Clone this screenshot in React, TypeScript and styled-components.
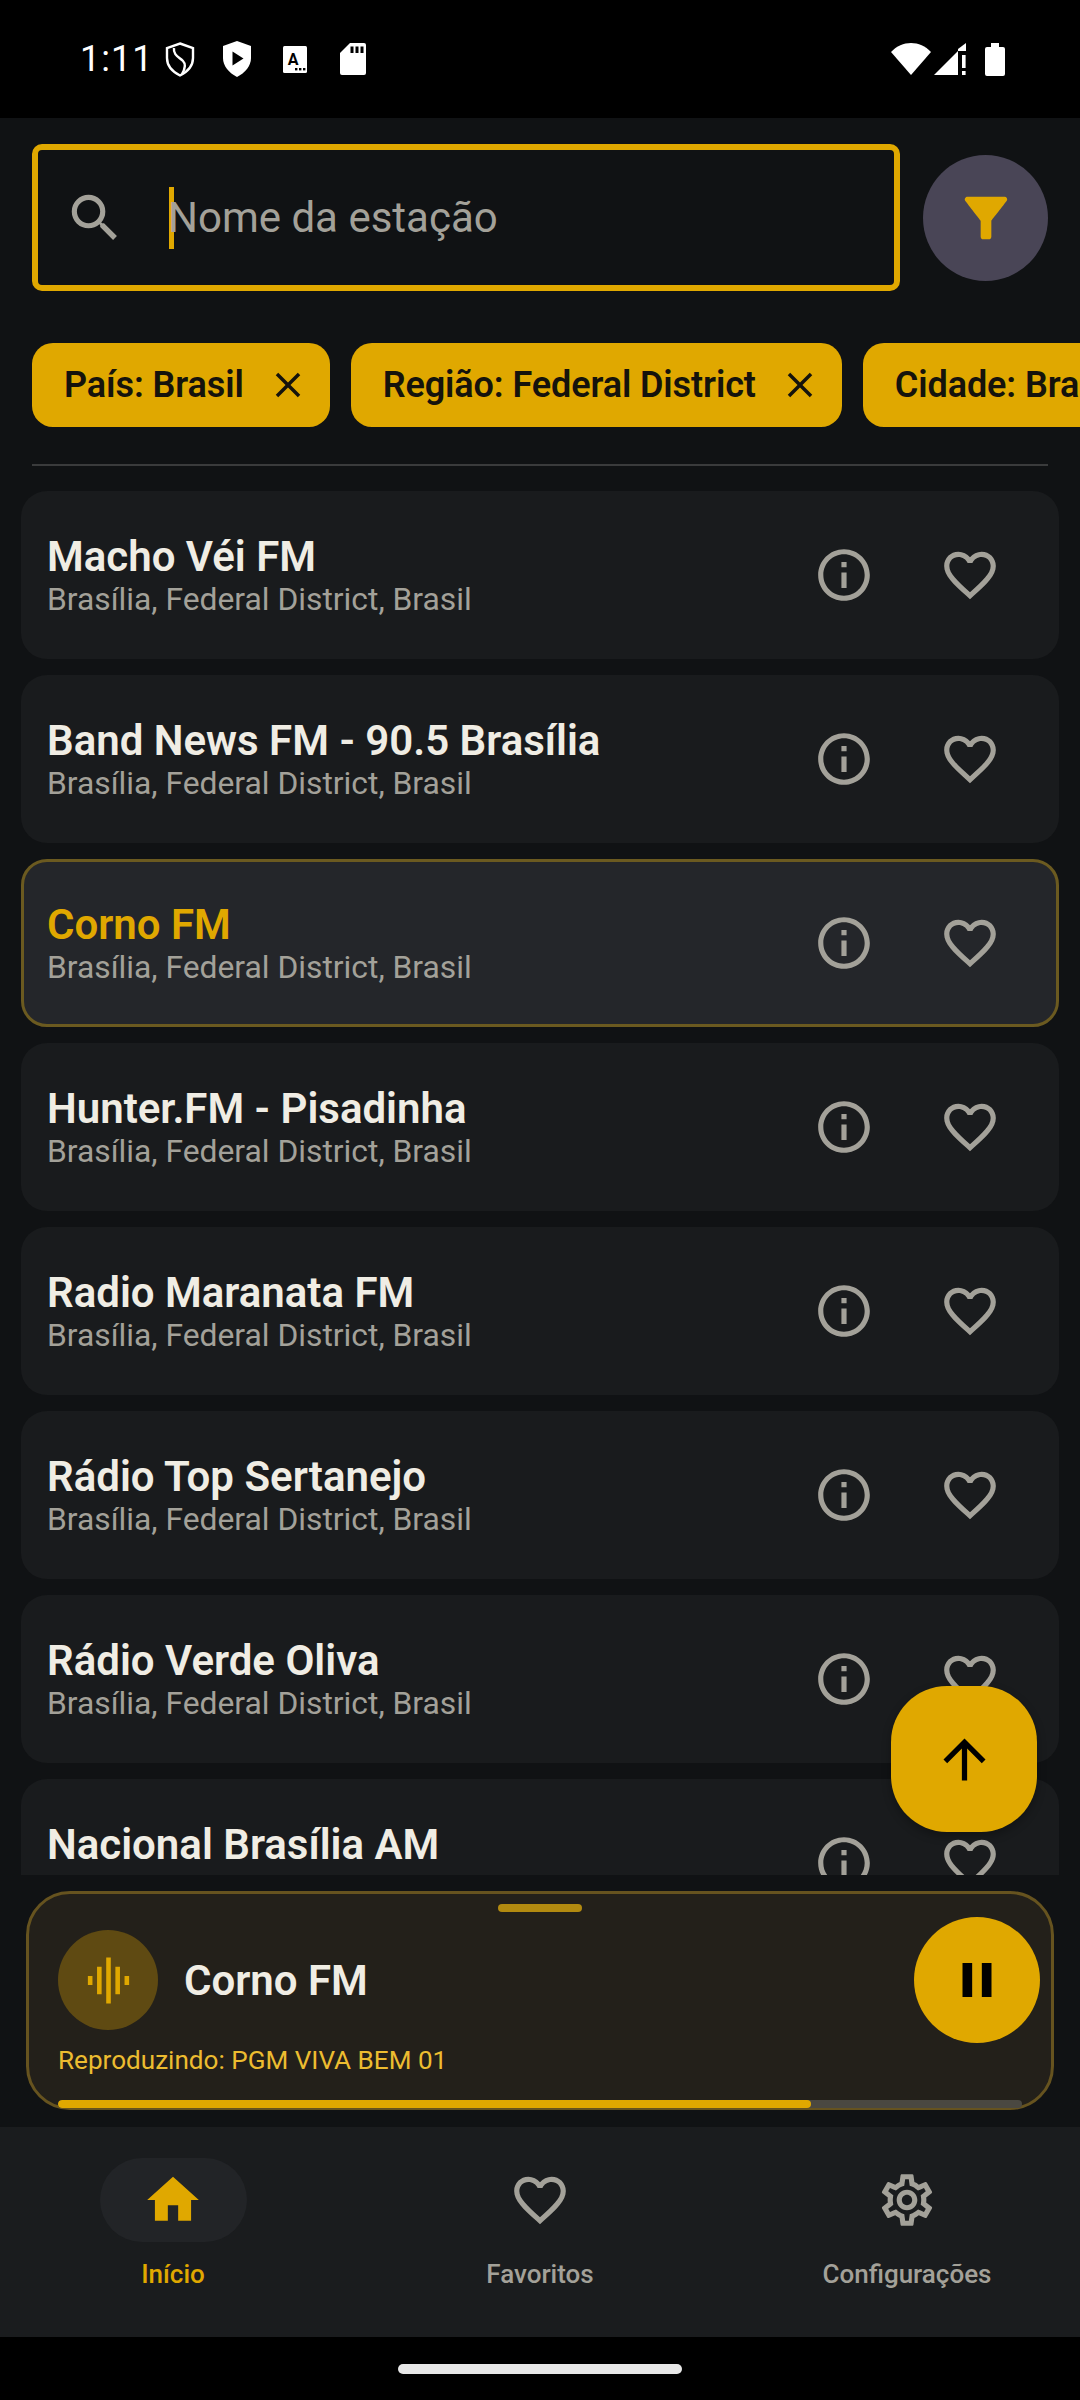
import { MdArrowUpward, MdClose, MdFavoriteBorder, MdFilterAlt, MdGraphicEq, MdHome, MdInfoOutline, MdOutlineSettings, MdPause, MdSearch } from "react-icons/md";
import styled, { createGlobalStyle } from "styled-components";

const GOLD = "#e0a800";

const stations = [
  "Macho Véi FM",
  "Band News FM - 90.5 Brasília",
  "Corno FM",
  "Hunter.FM - Pisadinha",
  "Radio Maranata FM",
  "Rádio Top Sertanejo",
  "Rádio Verde Oliva",
  "Nacional Brasília AM",
];

const filters = ["País: Brasil", "Região: Federal District", "Cidade: Brasília"];

const App = () => {
  return (
    <Screen>
      <GlobalStyle />
      <StatusBar>
        <StatusLeft>
          <Clock>1:11</Clock>
          <StatusIcon $left={12} width="30" height="35" viewBox="0 0 30 35" fill="none" stroke="#fff" strokeWidth="2.4">
            <path d="M15 1.5 L28 6 V16 C28 24 22 30 15 33.5 C8 30 2 24 2 16 V6 Z" />
            <path d="M9 6 C8 13 14 15 18 19 C21 22 20 27 17 32" />
          </StatusIcon>
          <StatusIcon $left={27} width="30" height="36" viewBox="0 0 30 36">
            <path fill="#fff" d="M15 0 L29 5 V17 C29 25 23 32 15 36 C7 32 1 25 1 17 V5 Z" />
            <path fill="#000" d="M10.5 10.5 L21.5 17.5 L10.5 24.5 Z" />
          </StatusIcon>
          <StatusIcon $left={31} width="24" height="27" viewBox="0 0 24 27">
            <rect width="24" height="27" rx="1.5" fill="#fff" />
            <text x="10" y="19" fontFamily="Roboto, sans-serif" fontWeight="700" fontSize="16" textAnchor="middle" fill="#000">A</text>
            <rect x="12" y="22" width="2.4" height="2.4" fill="#000" />
            <rect x="16" y="22" width="2.4" height="2.4" fill="#000" />
            <rect x="20" y="22" width="2.4" height="2.4" fill="#000" />
          </StatusIcon>
          <StatusIcon $left={33} width="26" height="32" viewBox="0 0 26 32">
            <path fill="#fff" d="M10 0 H24 A2 2 0 0 1 26 2 V30 A2 2 0 0 1 24 32 H2 A2 2 0 0 1 0 30 V10 Z" />
            <rect x="10.5" y="3.5" width="3" height="6.5" fill="#000" />
            <rect x="15.5" y="3.5" width="3" height="6.5" fill="#000" />
            <rect x="20.5" y="3.5" width="3" height="6.5" fill="#000" />
          </StatusIcon>
        </StatusLeft>
        <StatusRight>
          <StatusIcon $left={0} width="40" height="32" viewBox="0 0 40 32">
            <path fill="#fff" d="M0 9 C11 -3 29 -3 40 9 L20 32 Z" />
          </StatusIcon>
          <StatusIcon $left={3} width="32" height="32" viewBox="0 0 32 32">
            <path fill="#fff" d="M24 8 V32 H0 Z" />
            <rect x="28" y="12" width="3.6" height="13" fill="#fff" />
            <rect x="28" y="28" width="3.6" height="4" fill="#fff" />
            <path fill="#fff" d="M24 6 L32 0 V8 H24 Z" />
          </StatusIcon>
          <StatusIcon $left={19} width="20" height="33" viewBox="0 0 20 33">
            <path fill="#fff" d="M6 0 H14 V4 H18 A2 2 0 0 1 20 6 V31 A2 2 0 0 1 18 33 H2 A2 2 0 0 1 0 31 V6 A2 2 0 0 1 2 4 H6 Z" />
          </StatusIcon>
        </StatusRight>
      </StatusBar>

      <Content>
        <SearchRow>
          <SearchField>
            <MdSearch size={62} color="#a3a199" />
            <Caret />
            <Placeholder>Nome da estação</Placeholder>
          </SearchField>
          <FilterButton>
            <MdFilterAlt size={64} color={GOLD} />
          </FilterButton>
        </SearchRow>

        <ChipRow>
          {filters.map((filter) => (
            <Chip key={filter}>
              {filter}
              <MdClose size={42} />
            </Chip>
          ))}
        </ChipRow>

        <Divider />

        <StationList>
          {stations.map((name) => (
            <StationCard key={name} $active={name === "Corno FM"}>
              <StationText>
                <StationName $active={name === "Corno FM"}>{name}</StationName>
                <StationPlace>Brasília, Federal District, Brasil</StationPlace>
              </StationText>
              <StationAction>
                <MdInfoOutline size={62} />
              </StationAction>
              <StationAction>
                <MdFavoriteBorder size={62} />
              </StationAction>
            </StationCard>
          ))}
          <ScrollTop>
            <MdArrowUpward size={63} />
          </ScrollTop>
        </StationList>

        <Player>
          <Handle />
          <PlayerRow>
            <Artwork>
              <MdGraphicEq size={55} color={GOLD} />
            </Artwork>
            <PlayerName>Corno FM</PlayerName>
            <PauseButton>
              <MdPause size={58} />
            </PauseButton>
          </PlayerRow>
          <NowPlaying>Reproduzindo: PGM VIVA BEM 01</NowPlaying>
          <ProgressTrack>
            <ProgressFill style={{ width: `${(753 / 964) * 100}%` }} />
          </ProgressTrack>
        </Player>

        <BottomNav>
          <NavItem>
            <NavPill $active>
              <MdHome size={62} color={GOLD} />
            </NavPill>
            <NavLabel $active>Início</NavLabel>
          </NavItem>
          <NavItem>
            <NavPill>
              <MdFavoriteBorder size={62} />
            </NavPill>
            <NavLabel>Favoritos</NavLabel>
          </NavItem>
          <NavItem>
            <NavPill>
              <MdOutlineSettings size={62} />
            </NavPill>
            <NavLabel>Configurações</NavLabel>
          </NavItem>
        </BottomNav>
      </Content>

      <GestureArea>
        <GestureBar />
      </GestureArea>
    </Screen>
  );
};

export default App;

/*
Styles
*/

const GlobalStyle = createGlobalStyle`
  html, body {
    margin: 0;
    padding: 0;
    background: #000;
  }
`;

const Screen = styled.div`
  display: flex;
  flex-direction: column;
  width: 1080px;
  height: 2400px;
  overflow: hidden;
  font-family: Roboto, sans-serif;
  background: #000;
`;

const StatusBar = styled.div`
  display: flex;
  justify-content: space-between;
  align-items: center;
  flex: 0 0 118px;
  padding: 0 75px 0 80px;
  box-sizing: border-box;
`;

const StatusLeft = styled.div`
  display: flex;
  align-items: center;
`;

const StatusIcon = styled.svg<{ $left: number }>`
  margin-left: ${(p) => p.$left}px;
`;

const Clock = styled.span`
  color: #fff;
  font-size: 36px;
  letter-spacing: 1px;
`;

const StatusRight = styled.div`
  display: flex;
  align-items: center;
`;

const Content = styled.div`
  display: flex;
  flex-direction: column;
  flex: 1;
  min-height: 0;
  background: #101214;
`;

const SearchRow = styled.div`
  display: flex;
  align-items: center;
  gap: 23px;
  padding: 26px 32px 0;
`;

const SearchField = styled.div`
  display: flex;
  flex-shrink: 0;
  align-items: center;
  width: 868px;
  height: 147px;
  padding-left: 26px;
  box-sizing: border-box;
  border: 6px solid ${GOLD};
  border-radius: 10px;
`;

const Caret = styled.div`
  width: 5px;
  height: 62px;
  margin-left: 43px;
  background: ${GOLD};
`;

const Placeholder = styled.span`
  margin-left: -6px;
  color: #a3a199;
  font-size: 42px;
`;

const FilterButton = styled.div`
  display: flex;
  justify-content: center;
  align-items: center;
  width: 126px;
  height: 126px;
  border-radius: 50%;
  background: #494556;
`;

const ChipRow = styled.div`
  display: flex;
  gap: 21px;
  margin-top: 52px;
  padding-left: 32px;
  overflow: hidden;
`;

const Chip = styled.div`
  display: flex;
  flex-shrink: 0;
  align-items: center;
  gap: 23px;
  height: 84px;
  padding: 0 21px 0 32px;
  box-sizing: border-box;
  border-radius: 21px;
  background: ${GOLD};
  color: #15130c;
  font-size: 36px;
  font-weight: 600;
  letter-spacing: -0.1px;
`;

const Divider = styled.div`
  flex-shrink: 0;
  height: 2px;
  margin: 37px 32px 0;
  background: #3a3b3c;
`;

const StationList = styled.div`
  position: relative;
  display: flex;
  flex: 1;
  flex-direction: column;
  gap: 16px;
  min-height: 0;
  margin-top: 25px;
  padding: 0 21px;
  overflow: hidden;
`;

const StationCard = styled.div<{ $active?: boolean }>`
  display: flex;
  flex-shrink: 0;
  align-items: center;
  height: 168px;
  padding: 0 23px;
  box-sizing: border-box;
  border: 3px solid ${(p) => (p.$active ? "#6b5a20" : "transparent")};
  border-radius: 26px;
  background: ${(p) => (p.$active ? "#24262a" : "#191b1d")};
`;

const StationText = styled.div`
  display: flex;
  flex: 1;
  flex-direction: column;
  min-width: 0;
`;

const StationName = styled.div<{ $active?: boolean }>`
  color: ${(p) => (p.$active ? GOLD : "#f0ede4")};
  font-size: 42px;
  font-weight: 600;
  line-height: 48px;
`;

const StationPlace = styled.div`
  color: #a3a199;
  font-size: 31.8px;
  line-height: 36px;
`;

const StationAction = styled.div`
  display: flex;
  justify-content: center;
  align-items: center;
  width: 126px;
  color: #a3a199;
`;

const ScrollTop = styled.div`
  position: absolute;
  top: 1195px;
  right: 43px;
  display: flex;
  justify-content: center;
  align-items: center;
  width: 146px;
  height: 146px;
  border-radius: 56px;
  background: ${GOLD};
  color: #000;
  box-shadow: 0 4px 10px rgba(0, 0, 0, 0.3);
`;

const Player = styled.div`
  display: flex;
  flex-shrink: 0;
  flex-direction: column;
  height: 219px;
  margin: 16px 26px 17px;
  padding: 10px 29px 0;
  box-sizing: border-box;
  border: 3px solid #66531f;
  border-radius: 44px;
  background: #23201a;
`;

const Handle = styled.div`
  flex-shrink: 0;
  align-self: center;
  width: 84px;
  height: 8px;
  margin-bottom: 5px;
  border-radius: 4px;
  background: #b28a10;
`;

const PlayerRow = styled.div`
  display: flex;
  align-items: center;
  height: 126px;
  margin-right: -18px;
`;

const Artwork = styled.div`
  display: flex;
  justify-content: center;
  align-items: center;
  width: 100px;
  height: 100px;
  border-radius: 50%;
  background: #5f4a12;
`;

const PlayerName = styled.div`
  flex: 1;
  margin-left: 26px;
  color: #f0ede4;
  font-size: 42px;
  font-weight: 600;
`;

const PauseButton = styled.div`
  display: flex;
  justify-content: center;
  align-items: center;
  width: 126px;
  height: 126px;
  border-radius: 50%;
  background: ${GOLD};
  color: #000;
`;

const NowPlaying = styled.div`
  margin-top: 1px;
  color: #ecbc30;
  font-size: 26.1px;
  line-height: 32px;
`;

const ProgressTrack = styled.div`
  flex-shrink: 0;
  height: 8px;
  margin-top: 24px;
  border-radius: 4px;
  background: #4a4841;
  overflow: hidden;
`;

const ProgressFill = styled.div`
  height: 100%;
  border-radius: 4px;
  background: ${GOLD};
`;

const BottomNav = styled.div`
  display: grid;
  flex-shrink: 0;
  grid-template-columns: repeat(3, 367px);
  justify-content: center;
  height: 210px;
  padding: 31px 0 0;
  box-sizing: border-box;
  background: #1a1c1e;
`;

const NavItem = styled.div`
  display: flex;
  flex-direction: column;
  align-items: center;
`;

const NavPill = styled.div<{ $active?: boolean }>`
  display: flex;
  justify-content: center;
  align-items: center;
  width: 147px;
  height: 84px;
  border-radius: 42px;
  background: ${(p) => (p.$active ? "#222427" : "transparent")};
  color: #a3a199;
`;

const NavLabel = styled.div<{ $active?: boolean }>`
  margin-top: 16px;
  color: ${(p) => (p.$active ? GOLD : "#a3a199")};
  font-size: 26px;
  font-weight: 500;
  line-height: 32px;
`;

const GestureArea = styled.div`
  display: flex;
  flex: 0 0 63px;
  justify-content: center;
  padding-top: 27px;
  box-sizing: border-box;
`;

const GestureBar = styled.div`
  width: 284px;
  height: 10px;
  border-radius: 5px;
  background: #e8e8e8;
`;
